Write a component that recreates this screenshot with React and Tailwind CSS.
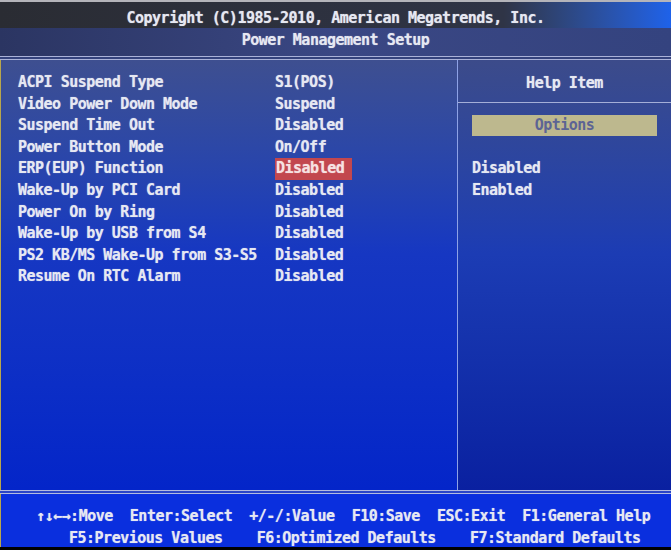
import React from 'react';

const rows = [
  ['ACPI Suspend Type', 'S1(POS)'],
  ['Video Power Down Mode', 'Suspend'],
  ['Suspend Time Out', 'Disabled'],
  ['Power Button Mode', 'On/Off'],
  ['ERP(EUP) Function', 'Disabled', true],
  ['Wake-Up by PCI Card', 'Disabled'],
  ['Power On by Ring', 'Disabled'],
  ['Wake-Up by USB from S4', 'Disabled'],
  ['PS2 KB/MS Wake-Up from S3-S5', 'Disabled'],
  ['Resume On RTC Alarm', 'Disabled'],
];

/**
 * BIOS power management screen
 */
export default function App() {
  return (
    <div className="w-[671px] h-[550px] flex flex-col bg-black overflow-hidden font-['DejaVu_Sans_Mono',monospace] font-bold text-[15px] tracking-[-0.5px] text-[#e6e8f2] [text-shadow:0_0_1px_rgba(255,255,255,0.6)]">
      {/* title bands */}
      <div className="h-[28px] pt-[5px] leading-[22px] text-center border-t-2 border-[#b4b4ba] bg-linear-to-r from-[#2a2c33] via-[#2f3446] via-75% to-[#1e62ea] whitespace-pre">
        Copyright (C)1985-2010, American Megatrends, Inc.
      </div>
      <div className="h-[28px] pt-[1px] leading-[22px] text-center bg-linear-to-r from-[#2b3562] via-[#3a4784] to-[#34437f]">
        Power Management Setup
      </div>
      <div className="h-[4px] border-y border-[#aab2d8] bg-[#34427c]"></div>

      {/* main panels */}
      <div className="flex-1 flex border-l border-[#b8a64c]">
        <div className="w-[457px] border-r border-[#8ea2e6] pt-[12px] pl-[17px] bg-linear-to-b from-[#3e4f90] via-[#1637c2] via-45% to-[#0425c9]">
          {rows.map(([label, value, active]) => (
            <div key={label} className="flex h-[21.6px] leading-[21.6px] whitespace-pre">
              <span className="w-[257px]">{label}</span>
              {active ? (
                <span className="inline-block w-[77px] pl-[1px] bg-[#c2474e] text-[#f6e2e2]">{value}</span>
              ) : (
                <span>{value}</span>
              )}
            </div>
          ))}
        </div>
        <div className="flex-1 flex flex-col bg-linear-to-b from-[#3c4b8a] via-[#1c3cb4] via-45% to-[#0a20a0]">
          <div className="h-[43px] pt-[4px] border-b border-[#a4aed8] flex items-center justify-center">Help Item</div>
          <div className="mt-[12px] mx-[14px] h-[21px] leading-[21px] bg-[#bdb88e] text-center text-[#5c6494] [text-shadow:none]">
            Options
          </div>
          <div className="mt-[22px] pl-[14px]">
            <div className="h-[21.6px] leading-[21.6px]">Disabled</div>
            <div className="h-[21.6px] leading-[21.6px]">Enabled</div>
          </div>
        </div>
      </div>

      {/* footer */}
      <div className="h-[4px] border-y border-[#b4bce0] bg-[#2a45c8]"></div>
      <div className="h-[53px] pt-[12px] pl-[35px] leading-[21.5px] bg-[#0a2fde] whitespace-pre border-l border-[#b8a64c]">
        <div>↑↓←→:Move  Enter:Select  +/-/:Value  F10:Save  ESC:Exit  F1:General Help</div>
        <div className="pl-[33px]">F5:Previous Values    F6:Optimized Defaults    F7:Standard Defaults</div>
      </div>
      <div className="h-[3px] bg-black"></div>
    </div>
  );
}
